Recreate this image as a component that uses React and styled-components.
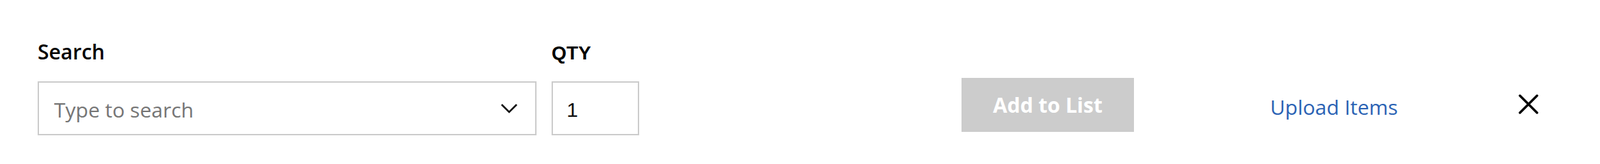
import React, { useState } from 'react';
import styled, { createGlobalStyle } from 'styled-components';

const GlobalStyle = createGlobalStyle`
  html, body {
    margin: 0;
    padding: 0;
    background: #ffffff;
  }
  body {
    font-family: 'Open Sans', 'Liberation Sans', sans-serif;
    color: #000000;
  }
`;

const Bar = styled.div`
  display: flex;
  align-items: flex-end;
  padding: 58px 90px 0 55px;
`;

const Field = styled.div`
  display: flex;
  flex-direction: column;
  width: ${(p) => p.$width}px;
  margin-right: ${(p) => p.$gap || 0}px;
`;

const Label = styled.label`
  display: block;
  height: 36px;
  margin-bottom: 25px;
  font-family: ${(p) =>
    p.$arial ? "'Liberation Sans', Arial, sans-serif" : "'Open Sans', sans-serif"};
  font-size: ${(p) => (p.$arial ? 28 : 30)}px;
  font-weight: ${(p) => (p.$arial ? 700 : 600)};
  line-height: 36px;
  padding-top: ${(p) => (p.$arial ? 2 : 0)}px;
  box-sizing: border-box;
`;

const Box = styled.div`
  display: flex;
  align-items: center;
  height: 79px;
  box-sizing: border-box;
  border: 2px solid #cccccc;
  background: #ffffff;
`;

const SearchInput = styled.input`
  flex: 1;
  min-width: 0;
  border: 0;
  outline: none;
  background: transparent;
  padding: 3px 0 0 22px;
  font-family: 'Open Sans', sans-serif;
  font-size: 30px;
  color: #222222;

  &::placeholder {
    color: #757575;
    opacity: 1;
  }
`;

const QtyInput = styled.input`
  width: 100%;
  border: 0;
  outline: none;
  background: transparent;
  padding: 4px 0 0 20px;
  font-family: 'Liberation Sans', Arial, sans-serif;
  font-size: 30px;
  color: #111111;
`;

const Chevron = styled.svg`
  flex: none;
  width: 26px;
  height: 16px;
  margin: 0 25px 0 12px;
`;

const AddButton = styled.button`
  width: 252px;
  height: 79px;
  margin: 0 199px 5px 471px;
  border: 0;
  background: #cccccc;
  color: #ffffff;
  font-family: 'Open Sans', sans-serif;
  font-size: 30px;
  font-weight: 700;
  cursor: not-allowed;
`;

const UploadLink = styled.a`
  margin-bottom: 21px;
  font-family: 'Open Sans', sans-serif;
  font-size: 30px;
  line-height: 41px;
  color: #2a62b4;
  text-decoration: none;
  cursor: pointer;
`;

const CloseButton = styled.button`
  display: flex;
  margin: 0 0 31px auto;
  padding: 0;
  border: 0;
  background: none;
  cursor: pointer;
`;

const App = () => {
  const [query, setQuery] = useState('');
  const [qty, setQty] = useState('1');

  return (
    <>
      <GlobalStyle />
      <Bar>
        <Field $width={729} $gap={22}>
          <Label>Search</Label>
          <Box>
            <SearchInput
              value={query}
              onChange={(e) => setQuery(e.target.value)}
              placeholder="Type to search"
            />
            <Chevron viewBox="0 0 26 16">
              <polyline
                points="2,2 13,13 24,2"
                fill="none"
                stroke="#111"
                strokeWidth="2.6"
              />
            </Chevron>
          </Box>
        </Field>
        <Field $width={128}>
          <Label $arial>QTY</Label>
          <Box>
            <QtyInput value={qty} onChange={(e) => setQty(e.target.value)} />
          </Box>
        </Field>
        <AddButton disabled>Add to List</AddButton>
        <UploadLink>Upload Items</UploadLink>
        <CloseButton aria-label="Close">
          <svg width="29" height="29" viewBox="0 0 29 29">
            <path
              d="M2 2 L27 27 M27 2 L2 27"
              stroke="#000"
              strokeWidth="3.4"
              strokeLinecap="round"
            />
          </svg>
        </CloseButton>
      </Bar>
    </>
  );
};

export default App;
